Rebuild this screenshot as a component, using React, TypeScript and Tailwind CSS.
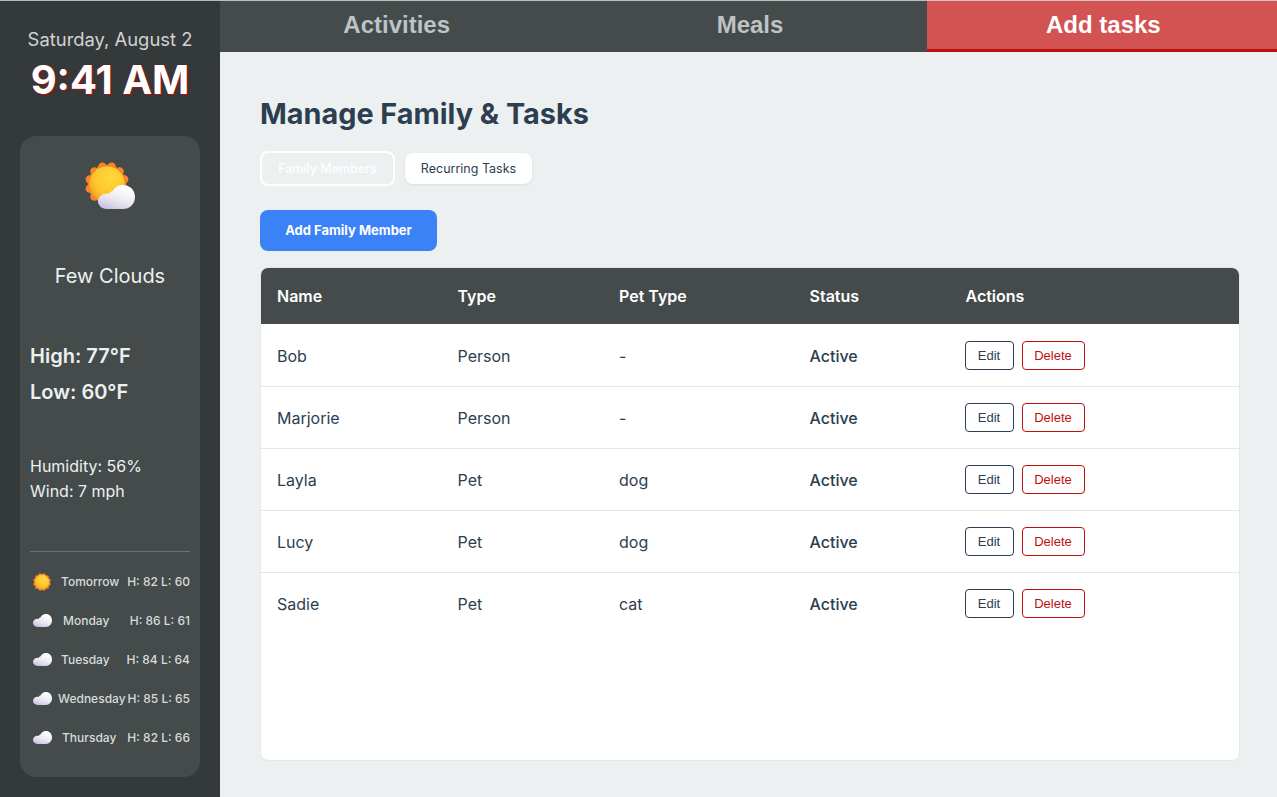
import React from "react";

function SunBody({ id }: { id: string }) {
  const pts = Array.from({ length: 12 }, (_, i) => {
    const a = ((i + 0.5) / 12) * Math.PI * 2;
    return [32 + 26 * Math.cos(a), 32 + 26 * Math.sin(a)];
  });
  return (
    <>
      <defs>
        <radialGradient id={id} cx="0.62" cy="0.32" r="0.8">
          <stop offset="0" stopColor="#ffd83a" />
          <stop offset="0.6" stopColor="#fcc62c" />
          <stop offset="1" stopColor="#e99c27" />
        </radialGradient>
      </defs>
      <circle cx="32" cy="32" r="28" fill="#f9852b" />
      {pts.map(([x, y], i) => (
        <circle key={i} cx={x} cy={y} r="6" fill="#f9852b" />
      ))}
      <circle cx="32" cy="32" r="25.5" fill={`url(#${id})`} />
    </>
  );
}

function CloudPath({ id }: { id: string }) {
  return (
    <>
      <defs>
        <linearGradient id={id} x1="0.75" y1="0.1" x2="0.3" y2="1">
          <stop offset="0" stopColor="#ffffff" />
          <stop offset="0.5" stopColor="#eeebf1" />
          <stop offset="0.8" stopColor="#dcd6ea" />
          <stop offset="1" stopColor="#c7bfe8" />
        </linearGradient>
      </defs>
      <path
        d="M12 36C5.500 36 0 31 0 24.500C0 18 5.500 13 12 13C13.500 13 14.500 13.200 15.500 13.500C16.500 11 18.500 9.500 21 9C23 3.500 28.500 0 35 0C44.500 0 52 7.500 52 17.500C52 28 45 36 35 36Z"
        fill={`url(#${id})`}
      />
    </>
  );
}

function PartlyCloudy() {
  return (
    <svg viewBox="0 0 50 50" className="w-[50px] h-[50px]">
      <svg x="0" y="0" width="44" height="44" viewBox="0 0 64 64">
        <SunBody id="big-sun" />
      </svg>
      <svg x="13" y="23" width="37" height="24" viewBox="0 0 52 36" preserveAspectRatio="none">
        <CloudPath id="big-cloud" />
      </svg>
    </svg>
  );
}

function SmallSun() {
  return (
    <svg viewBox="0 0 64 64" className="w-[18px] h-[18px] shrink-0">
      <SunBody id="small-sun" />
    </svg>
  );
}

function SmallCloud({ id }: { id: string }) {
  return (
    <svg viewBox="0 0 52 36" preserveAspectRatio="none" className="w-[19px] h-[13px] shrink-0">
      <CloudPath id={id} />
    </svg>
  );
}

const forecast = [
  { day: "Tomorrow", temp: "H: 82 L: 60", sun: true, cls: "ml-[3px]" },
  { day: "Monday", temp: "H: 86 L: 61", cls: "ml-[5px]" },
  { day: "Tuesday", temp: "H: 84 L: 64", cls: "ml-[3px]" },
  { day: "Wednesday", temp: "H: 85 L: 65", cls: "ml-0" },
  { day: "Thursday", temp: "H: 82 L: 66", cls: "ml-[4px]" },
];

const rows = [
  ["Bob", "Person", "-"],
  ["Marjorie", "Person", "-"],
  ["Layla", "Pet", "dog"],
  ["Lucy", "Pet", "dog"],
  ["Sadie", "Pet", "cat"],
];

export default function App() {
  return (
    <div className="relative h-[797px] w-full overflow-hidden">
      <div className="absolute inset-x-0 top-0 h-px bg-[#d8dcdc]/80 z-10" />
      <div className="flex h-[797px] w-[1280px] font-['Inter',sans-serif] bg-[#ecf0f1]">
        <aside className="w-[220px] shrink-0 bg-[#343a3a] px-5 pt-[28px] flex flex-col items-stretch">
          <div className="text-center text-[18.4px] leading-[22px] text-[#d0d3d4]">Saturday, August 2</div>
          <div className="text-center text-[40px] leading-[48px] font-bold text-white mt-[6px] [text-shadow:1px_1px_1px_#b01010,0_0_2px_#8a1010]">9:41 AM</div>
          <div className="mt-[32px] h-[641px] rounded-2xl bg-[#444b4a] px-2.5 flex flex-col">
            <div className="flex justify-center pt-[26px]"><PartlyCloudy /></div>
            <div className="text-center text-[20px] leading-6 text-[#ecf0f1] mt-[52px]">Few Clouds</div>
            <div className="mt-[56px] text-[20px] leading-6 font-semibold text-[#ecf0f1]">High: 77°F</div>
            <div className="mt-3 text-[20px] leading-6 font-semibold text-[#ecf0f1]">Low: 60°F</div>
            <div className="mt-[50px] text-[16px] leading-[25px] text-[#ecf0f1]">Humidity: 56%</div>
            <div className="text-[16px] leading-[25px] text-[#ecf0f1]">Wind: 7 mph</div>
            <div className="mt-[47px] border-t border-[#6b7170]" />
            <div className="mt-[10px] flex flex-col">
              {forecast.map((f, i) => (
                <div key={f.day} className="h-[39px] flex items-center text-[12px] font-medium text-[#d8dcdd]">
                  <div className="w-[28px] flex shrink-0">
                    <span className="ml-[3px]">{f.sun ? <SmallSun /> : <SmallCloud id={`c${i}`} />}</span>
                  </div>
                  <span className={`whitespace-nowrap ${f.cls}`}>{f.day}</span>
                  <span className="ml-auto whitespace-nowrap">{f.temp}</span>
                </div>
              ))}
            </div>
          </div>
        </aside>
        <div className="flex-1 flex flex-col min-w-0">
          <nav className="grid grid-cols-3 h-[52px] bg-[#444b4a] font-['Liberation_Sans',sans-serif] text-[24px] font-bold">
            <div className="flex items-center justify-center text-[#bdc3c7] border-b-[3px] border-transparent">Activities</div>
            <div className="flex items-center justify-center text-[#bdc3c7] border-b-[3px] border-transparent">Meals</div>
            <div className="flex items-center justify-center text-white bg-[#d35353] border-b-[3px] border-[#c00f0f]">Add tasks</div>
          </nav>
          <main className="flex-1 px-10 pt-[44px] flex flex-col min-h-0">
            <h1 className="text-[28.8px] leading-[35px] font-bold text-[#2c3e50]">Manage Family &amp; Tasks</h1>
            <div className="flex gap-[10px] mt-[20px] items-center">
              <button className="h-[35px] w-[135px] pt-px rounded-lg border-2 border-white text-[12.5px] font-medium text-white">Family Members</button>
              <button className="h-[31px] w-[127px] pt-0.5 rounded-lg bg-white text-[12.5px] text-[#2c3e50] shadow-[0_1px_3px_rgba(0,0,0,0.08)]">Recurring Tasks</button>
            </div>
            <button className="mt-[24px] h-[41px] w-[177px] rounded-lg bg-[#3b82f6] text-[13px] font-bold text-white">Add Family Member</button>
            <div className="mt-[16px] h-[494px] rounded-lg bg-white border border-[#e5e7eb] overflow-hidden">
              <table className="w-full border-collapse table-fixed">
                <thead>
                  <tr className="h-[56px] bg-[#444b4a] text-left text-[16px] font-semibold text-white">
                    <th className="w-[180.500px] pl-4 font-semibold">Name</th>
                    <th className="w-[161.500px] pl-4 font-semibold">Type</th>
                    <th className="w-[190.500px] pl-4 font-semibold">Pet Type</th>
                    <th className="w-[156px] pl-4 font-semibold">Status</th>
                    <th className="pl-4 font-semibold">Actions</th>
                  </tr>
                </thead>
                <tbody>
                  {rows.map(([n, t, p], i) => (
                    <tr key={n} className={`h-[62px] text-[16px] text-[#2c3e50] ${i < 4 ? "border-b border-[#e5e7eb]" : ""}`}>
                      <td className="pl-4 pt-0.5">{n}</td>
                      <td className="pl-4 pt-0.5">{t}</td>
                      <td className="pl-4 pt-0.5">{p}</td>
                      <td className="pl-4 pt-0.5 font-medium">Active</td>
                      <td className="pl-[15px] pt-px">
                        <div className="flex gap-2 font-['Liberation_Sans',sans-serif] text-[13px]">
                          <button className="h-[29px] w-[49px] rounded-[4px] border border-[#2c3e50] text-[#2c3e50]">Edit</button>
                          <button className="h-[29px] w-[63px] rounded-[4px] border border-[#c00f0f] text-[#c00f0f]">Delete</button>
                        </div>
                      </td>
                    </tr>
                  ))}
                </tbody>
              </table>
            </div>
          </main>
        </div>
      </div>
    </div>
  );
}
